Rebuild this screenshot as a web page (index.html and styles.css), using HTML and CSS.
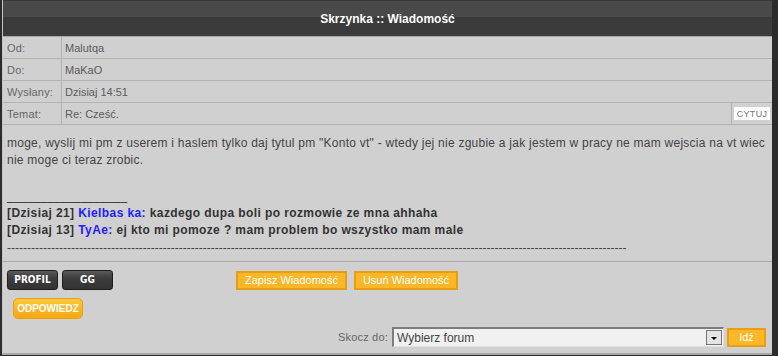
FILE: index.html
```html
<!DOCTYPE html>
<html lang="pl">
<head>
  <meta charset="UTF-8">
  <title>Skrzynka :: Wiadomość</title>
  <link rel="stylesheet" href="styles.css">
</head>
<body>
  <div class="box">
    <div class="head">Skrzynka :: Wiadomość</div>

    <div class="row">
      <div class="label">Od:</div>
      <div class="value">Malutqa</div>
    </div>
    <div class="row">
      <div class="label">Do:</div>
      <div class="value">MaKaO</div>
    </div>
    <div class="row">
      <div class="label">Wysłany:</div>
      <div class="value">Dzisiaj 14:51</div>
    </div>
    <div class="row">
      <div class="label">Temat:</div>
      <div class="value">Re: Cześć.</div>
      <div class="quote"><span class="quote-btn">CYTUJ</span></div>
    </div>

    <div class="message">
      <p class="text">moge, wyslij mi pm z userem i haslem tylko daj tytul pm "Konto vt" - wtedy jej nie zgubie a jak jestem w pracy ne mam wejscia na vt wiec nie moge ci teraz zrobic.</p>
      <div class="sig">
        <div class="sig-line">__________________</div>
        <div class="shout">[Dzisiaj 21] <span class="nick">Kielbas ka:</span> kazdego dupa boli po rozmowie ze mna ahhaha</div>
        <div class="shout">[Dzisiaj 13] <span class="nick">TyAe:</span> ej kto mi pomoze ? mam problem bo wszystko mam male</div>
        <div class="dashes">-----------------------------------------------------------------------------------------------------------------------------------------------------------</div>
      </div>
    </div>

    <div class="actions">
      <div class="user-btns">
        <span class="dark-btn">PROFIL</span>
        <span class="dark-btn">GG</span>
      </div>
      <div class="msg-btns">
        <button type="button" class="orange-btn">Zapisz Wiadomość</button>
        <button type="button" class="orange-btn">Usuń Wiadomość</button>
      </div>
    </div>

    <div class="reply-row">
      <span class="reply-btn">ODPOWIEDZ</span>
    </div>

    <div class="jump">
      <span class="jump-label">Skocz do:</span>
      <div class="select">
        <span class="select-text">Wybierz forum</span>
        <span class="select-arrow"></span>
      </div>
      <button type="button" class="orange-btn go-btn">Idź</button>
    </div>
  </div>
</body>
</html>
```

FILE: styles.css
```css
body {
  margin: 0;
  padding: 0 6px 0 2px;
  background-color: #2b2b2b;
  font-family: "Liberation Sans", Arial, sans-serif;
}
.box {
  background: #d0d0d0;
  border-left: 1px solid #c4c4c4;
  border-bottom: 2px solid #a8a8a8;
}
.head {
  height: 36px;
  line-height: 38px;
  background: linear-gradient(#3a3a3a 0, #3a3a3a 1px, #494949 1px, #494949 17px, #3b3b3b 17px);
  border-bottom: 1px solid #a9a9a9;
  color: #fff;
  font-weight: bold;
  font-size: 12px;
  text-align: center;
}
.row {
  display: flex;
  height: 21px;
  border-bottom: 1px solid #b3b3b3;
  font-size: 11px;
  color: #666;
}
.label {
  width: 54px;
  padding-left: 4px;
  border-right: 1px solid #b3b3b3;
  line-height: 22px;
  letter-spacing: 0.2px;
}
.value {
  flex: 1;
  padding-left: 3px;
  line-height: 22px;
  color: #5a5a5a;
}
.quote {
  width: 40px;
  border-left: 1px solid #b3b3b3;
  display: flex;
  align-items: center;
  justify-content: center;
}
.quote-btn {
  background: #fff;
  color: #777;
  font-size: 9px;
  padding: 2px 3px 1px;
  letter-spacing: 0.3px;
}
.message {
  padding: 10px 4px 4px;
  border-bottom: 1px solid #a9a9a9;
  color: #444;
  font-size: 12px;
  line-height: 17px;
}
.text {
  margin: 0;
  letter-spacing: 0.25px;
}
.sig {
  margin-top: 19px;
  color: #333;
}
.shout {
  font-weight: bold;
  letter-spacing: 0.4px;
}
.nick {
  color: #1e1eff;
}
.dashes {
  color: #444;
  white-space: nowrap;
  overflow: hidden;
  margin-top: 1px;
}
.actions {
  display: flex;
  align-items: center;
  padding: 8px 4px 0;
}
.user-btns {
  display: flex;
  gap: 4px;
}
.dark-btn {
  width: 49px;
  height: 18px;
  line-height: 18px;
  border: 1px solid #1f1f1f;
  border-radius: 3px;
  background: linear-gradient(#5a5a5a, #3c3c3c 40%, #333);
  color: #fff;
  font-family: "DejaVu Sans Condensed", "DejaVu Sans", sans-serif;
  font-weight: bold;
  font-size: 10px;
  text-align: center;
}
.msg-btns {
  display: flex;
  gap: 7px;
  margin-left: 123px;
}
.orange-btn {
  background: #fbb727;
  border: 2px solid #e69f12;
  color: #fff;
  font-family: "Liberation Sans", Arial, sans-serif;
  font-size: 11px;
  height: 19px;
  padding: 0 7px;
  margin: 0;
}
.reply-row {
  padding: 8px 10px 0;
}
.reply-btn {
  display: inline-block;
  width: 68px;
  height: 19px;
  line-height: 19px;
  border: 1px solid #eea00e;
  border-radius: 5px;
  background: linear-gradient(#ffc93d, #fbb21f 60%, #f6a812);
  color: #fff;
  font-weight: bold;
  font-size: 10px;
  text-align: center;
}
.jump {
  display: flex;
  justify-content: flex-end;
  align-items: center;
  gap: 3px;
  padding: 8px 6px 6px;
}
.jump-label {
  font-size: 11px;
  color: #666;
  margin-right: 1px;
  letter-spacing: 0.2px;
}
.select {
  width: 325px;
  height: 15px;
  display: flex;
  align-items: center;
  justify-content: space-between;
  background: #f1f1f1;
  border-style: solid;
  border-width: 2px 1px 1px 2px;
  border-color: #7c7c7c #e0e0e0 #e0e0e0 #7c7c7c;
  padding: 1px 1px 1px 3px;
}
.select-text {
  font-size: 12px;
  color: #444;
}
.select-arrow {
  width: 14px;
  height: 13px;
  border: 1px solid #777;
  background: #e4e4e4;
  position: relative;
}
.select-arrow::after {
  content: "";
  position: absolute;
  left: 4px;
  top: 6px;
  border-left: 3px solid transparent;
  border-right: 3px solid transparent;
  border-top: 3px solid #000;
}
.go-btn {
  width: 39px;
  padding: 0;
}
```
